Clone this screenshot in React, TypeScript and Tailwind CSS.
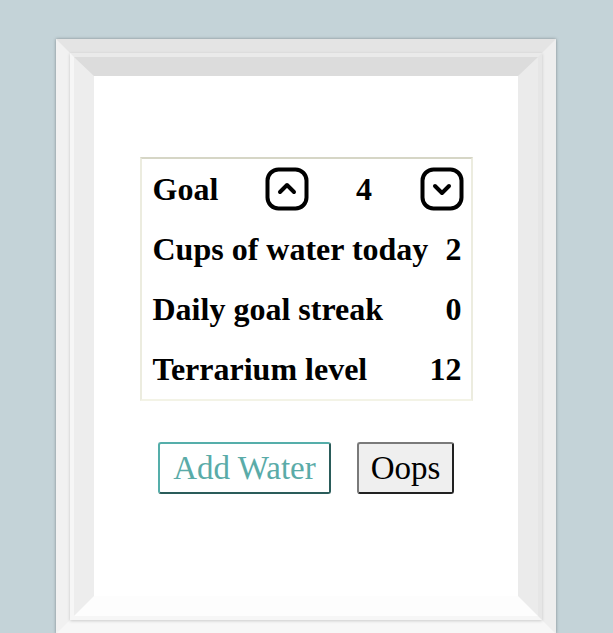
import React from 'react'

function ChevronBox({ dir }: { dir: 'up' | 'down' }) {
    const d = dir === 'up' ? 'M15 25 L22 18 L29 25' : 'M15 19 L22 26 L29 19'
    return (
        <button className="w-[44px] h-[44px] flex items-center justify-center shrink-0" aria-label={dir === 'up' ? 'Increase goal' : 'Decrease goal'}>
            <svg width="44" height="44" viewBox="0 0 44 44" fill="none" stroke="#000" strokeWidth="4" strokeLinecap="round" strokeLinejoin="round">
                <rect x="2.5" y="2.5" width="39" height="39" rx="11" />
                <path d={d} />
            </svg>
        </button>
    )
}

const ROWS: [string, number][] = [
    ['Cups of water today', 2],
    ['Daily goal streak', 0],
    ['Terrarium level', 12],
]

export default function App() {
    return (
        <div className="min-h-screen bg-[#c4d3d8] pt-[39px] font-['Liberation_Serif',serif] overflow-hidden">
            {/* outer frame */}
            <div className="ml-[56px] w-[500px] border-[14px] border-t-[#e4e4e4] border-l-[#f1f1f1] border-r-[#eeeeee] border-b-[#f7f7f7] shadow-[0_0_3px_rgba(0,0,0,0.35)]">
                {/* molding */}
                <div className="border-4 border-t-[#eaeaea] border-l-[#f6f6f6] border-r-[#e6e6e6] border-b-[#f6f6f6] shadow-[0_1px_3px_rgba(0,0,0,0.18)]">
                    {/* bevel */}
                    <div className="border-[20px] border-t-[19px] border-t-[#dcdcdc] border-l-[#ededed] border-r-[#ebebeb] border-b-[#fdfdfd] shadow-[inset_0_1px_2px_rgba(0,0,0,0.12)]">
                        <div className="bg-white h-[520px] pt-[81px] flex flex-col items-center">
                            <div className="w-[333px] border-2 border-t-[#d6d6c6] border-l-[#ececdf] border-r-[#ececdf] border-b-[#f3f3e6] text-[32px] font-bold text-black">
                                <div className="h-[60px] flex items-center pl-[11px] pr-[7px]">
                                    <span className="w-[112px]">Goal</span>
                                    <ChevronBox dir="up" />
                                    <span className="flex-1 text-center">4</span>
                                    <ChevronBox dir="down" />
                                </div>
                                {ROWS.map(([label, value]) => (
                                    <div key={label} className="h-[60px] flex items-center justify-between pl-[11px] pr-[9px]">
                                        <span>{label}</span>
                                        <span>{value}</span>
                                    </div>
                                ))}
                            </div>
                            <div className="flex gap-[26px] mt-[41px]">
                                <button className="w-[173px] h-[52px] rounded-[3px] border-2 border-t-[#55aeaa] border-l-[#55aeaa] border-r-[#2a5c5a] border-b-[#2a5c5a] bg-white text-[33px] text-[#5aaba8]">
                                    Add Water
                                </button>
                                <button className="w-[97px] h-[52px] rounded-[3px] border-2 border-t-[#7a7a7a] border-l-[#7a7a7a] border-r-[#222222] border-b-[#222222] bg-[#efefef] text-[33px] text-black">
                                    Oops
                                </button>
                            </div>
                        </div>
                    </div>
                </div>
            </div>
        </div>
    )
}
